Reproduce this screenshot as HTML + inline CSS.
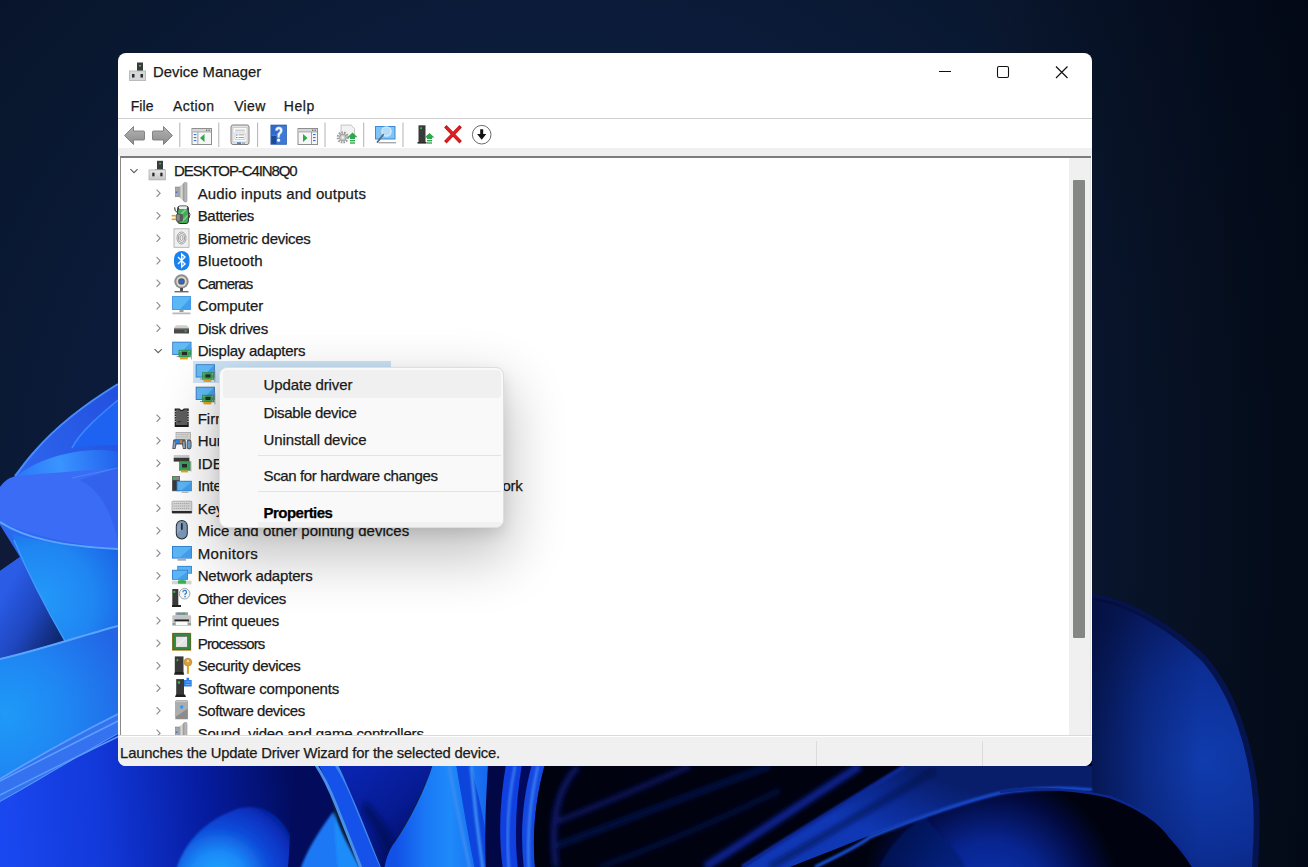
<!DOCTYPE html>
<html><head><meta charset="utf-8">
<style>
*{box-sizing:border-box;margin:0;padding:0}
html,body{width:1308px;height:867px;overflow:hidden;background:#06122a;font-family:"Liberation Sans",sans-serif;color:#000}
#wp{position:absolute;left:0;top:0}
#win{position:absolute;left:118px;top:53px;width:974px;height:713px;background:#fff;border-radius:8px;overflow:hidden}
.t{position:absolute;white-space:pre;line-height:1;-webkit-text-stroke:0.25px currentColor}
#tb{position:absolute;left:0;top:66px;width:974px;height:29px;background:#fff}
#band{position:absolute;left:0;top:95px;width:974px;height:8px;background:#f0f0f0}
#tree{position:absolute;left:2px;top:103px;width:971px;height:579px;background:#fff;border-top:2px solid #7c7c7c;border-left:1px solid #8a8a8a;overflow:hidden}
#sb{position:absolute;left:951px;top:105px;width:22px;height:577px;background:#f0f0f0;border-right:1px solid #e4e4e4}
#thumb{position:absolute;left:4px;top:22px;width:12px;height:458px;background:#858785;border-radius:1px}
#status{position:absolute;left:0;top:682px;width:974px;height:31px;background:#f0f0f0;border-top:1px solid #dadada}
#status:before{content:"";position:absolute;left:0;top:0;width:100%;height:1px;background:#fff}
.div{position:absolute;top:5px;width:1px;height:26px;background:#dcdcdc}
#menu{position:absolute;left:219px;top:366.5px;width:285px;height:161.5px;background:#f9f9f9;border-radius:8px;border:1px solid #dedede;box-shadow:0 24px 56px 6px rgba(0,0,0,0.24),0 6px 14px rgba(0,0,0,0.10);overflow:hidden}
#hover{position:absolute;left:3px;top:2px;width:278px;height:28px;background:#f0f0f0;border-radius:4px}
.sep{position:absolute;left:38px;width:243px;height:1px;background:#e3e3e3}
#sel{position:absolute;left:72.4px;top:203.1px;width:197.6px;height:22.2px;background:#cce4f7}
</style></head><body>
<svg id="wp" width="1308" height="867" viewBox="0 0 1308 867">
 <defs>
  <filter id="soft2" x="-20%" y="-20%" width="140%" height="140%"><feGaussianBlur stdDeviation="2.5"/></filter>
  <filter id="soft" x="-20%" y="-20%" width="140%" height="140%"><feGaussianBlur stdDeviation="1.2"/></filter>
  <radialGradient id="bg" cx="560" cy="500" r="950" gradientUnits="userSpaceOnUse">
   <stop offset="0" stop-color="#0f2248"/>
   <stop offset="0.45" stop-color="#0c1c3c"/>
   <stop offset="0.7" stop-color="#09172f"/>
   <stop offset="0.9" stop-color="#061128"/>
   <stop offset="1" stop-color="#040c1c"/>
  </radialGradient>
  <linearGradient id="rdark" x1="980" y1="0" x2="1308" y2="0" gradientUnits="userSpaceOnUse">
   <stop offset="0" stop-color="#000308" stop-opacity="0"/>
   <stop offset="1" stop-color="#000308" stop-opacity="0.55"/>
  </linearGradient>
  <linearGradient id="hl" x1="20" y1="470" x2="118" y2="455" gradientUnits="userSpaceOnUse"><stop offset="0" stop-color="#2c7af8"/><stop offset="0.4" stop-color="#3a94ff"/><stop offset="1" stop-color="#2262ee"/></linearGradient>
  <linearGradient id="lp1" x1="0" y1="480" x2="118" y2="400" gradientUnits="userSpaceOnUse">
   <stop offset="0" stop-color="#2f68f0"/><stop offset="1" stop-color="#2352e0"/>
  </linearGradient>
  <radialGradient id="cone" cx="40" cy="600" r="90" gradientUnits="userSpaceOnUse">
   <stop offset="0" stop-color="#2399fa"/><stop offset="0.6" stop-color="#1f86f2"/><stop offset="1" stop-color="#1c66e6"/>
  </radialGradient>
  <linearGradient id="under" x1="0" y1="600" x2="60" y2="635" gradientUnits="userSpaceOnUse">
   <stop offset="0" stop-color="#2a5ce6"/><stop offset="0.5" stop-color="#1f47c0"/><stop offset="1" stop-color="#0f2870"/>
  </linearGradient>
  <radialGradient id="wave" cx="5" cy="715" r="130" gradientUnits="userSpaceOnUse">
   <stop offset="0" stop-color="#1e9af8"/><stop offset="0.5" stop-color="#1f85f2"/><stop offset="1" stop-color="#2266e6"/>
  </radialGradient>
  <linearGradient id="bl" x1="0" y1="800" x2="290" y2="780" gradientUnits="userSpaceOnUse">
   <stop offset="0" stop-color="#1a48f0"/><stop offset="0.35" stop-color="#1238d8"/><stop offset="0.7" stop-color="#061ca0"/><stop offset="1" stop-color="#020d60"/>
  </linearGradient>
  <radialGradient id="blob" cx="218" cy="880" r="82" gradientUnits="userSpaceOnUse">
   <stop offset="0" stop-color="#22acff"/><stop offset="0.35" stop-color="#1a88f8"/><stop offset="0.65" stop-color="#0d4ad8"/><stop offset="0.88" stop-color="#0a34c4"/><stop offset="1" stop-color="#0626a8"/>
  </radialGradient>
  <linearGradient id="rib" x1="0" y1="0" x2="1" y2="0">
   <stop offset="0" stop-color="#1250e6"/><stop offset="0.5" stop-color="#1e86fa"/><stop offset="1" stop-color="#1560ea"/>
  </linearGradient>
  <radialGradient id="bowl" cx="990" cy="900" r="130" gradientUnits="userSpaceOnUse">
   <stop offset="0" stop-color="#0d35b8"/><stop offset="0.45" stop-color="#082590"/><stop offset="0.8" stop-color="#020a40"/><stop offset="1" stop-color="#00030f"/>
  </radialGradient>
  <radialGradient id="rp" cx="1205" cy="760" r="170" gradientUnits="userSpaceOnUse">
   <stop offset="0" stop-color="#103cae"/><stop offset="0.55" stop-color="#0c2e94"/><stop offset="1" stop-color="#081c66"/>
  </radialGradient>
  <linearGradient id="chan" x1="350" y1="770" x2="410" y2="850" gradientUnits="userSpaceOnUse"><stop offset="0" stop-color="#0a24b0"/><stop offset="0.6" stop-color="#061a90"/><stop offset="1" stop-color="#030f66"/></linearGradient>
  <linearGradient id="bigrib" x1="395" y1="0" x2="495" y2="0" gradientUnits="userSpaceOnUse"><stop offset="0" stop-color="#1250e6"/><stop offset="0.3" stop-color="#1a78f6"/><stop offset="0.55" stop-color="#1e8afa"/><stop offset="1" stop-color="#1560ea"/></linearGradient>
  <linearGradient id="rpov" x1="1092" y1="0" x2="1200" y2="0" gradientUnits="userSpaceOnUse"><stop offset="0" stop-color="#020826" stop-opacity="0.55"/><stop offset="0.5" stop-color="#020826" stop-opacity="0.2"/><stop offset="1" stop-color="#020826" stop-opacity="0"/></linearGradient>
  <linearGradient id="band" x1="905" y1="766" x2="880" y2="835" gradientUnits="userSpaceOnUse">
   <stop offset="0" stop-color="#081e6a"/><stop offset="0.5" stop-color="#0b2a92"/><stop offset="1" stop-color="#1038b4"/>
  </linearGradient>
 </defs>
 <rect width="1308" height="867" fill="url(#bg)"/>
 <rect width="1308" height="867" fill="url(#rdark)"/>

 <!-- ===== LEFT ===== -->
 <path d="M118,384 C95,398 60,422 35,451 C25,462 20,470 15,476 L0,487 L0,867 L118,867 Z" fill="url(#lp1)"/>
 <path d="M118,384 C95,398 60,422 35,451 C25,462 20,470 15,476" fill="none" stroke="#4a8cff" stroke-width="2"/>
 <path d="M118,400 C100,415 80,432 72,448 C90,446 105,445 118,445 Z" fill="#1e62f2"/>
 <path d="M118,400 C100,415 80,432 72,448" fill="none" stroke="#3f86ff" stroke-width="1.5"/>
 <path d="M16,477 C30,464 52,456 75,452 C95,449 110,450 118,452 L118,468 C90,471 50,474 16,477 Z" fill="url(#hl)"/>
 <path d="M0,487 C5,480 10,477 17,476 C50,473 90,470 118,468 L118,549 C80,546 40,538 0,522 Z" fill="#3a6cf5"/>
 <path d="M72,478 C90,474 105,471 118,468" fill="none" stroke="#4a86f8" stroke-width="1.2"/>
 <path d="M80,480 C100,490 110,510 118,540 L118,468 Z" fill="#2f5ce6" opacity="0.6"/>
 <path d="M0,525 L20,557 L0,571 Z" fill="#0f1a38"/>
 <path d="M12,534 C30,575 50,615 65,641 C85,635 100,630 118,626 L118,549 C60,546 25,538 12,534 Z" fill="url(#cone)"/>
 <path d="M0,571 L20,557 L65,641 C40,648 20,654 0,659 Z" fill="url(#under)"/>
 <path d="M14,540 C30,578 50,615 65,641" fill="none" stroke="#3aa0ff" stroke-width="1.5"/>
 <path d="M0,522 C25,538 60,546 118,549" fill="none" stroke="#5aa6ff" stroke-width="2"/>
 <path d="M0,659 C40,650 80,636 118,626 L118,714 C80,733 40,755 0,779 Z" fill="url(#wave)"/>
 <path d="M0,659 C40,650 80,636 118,626" fill="none" stroke="#58a6ff" stroke-width="2"/>
 <path d="M0,779 C40,755 80,733 118,714 L118,734 C80,755 40,780 0,802 Z" fill="#3572f0"/>
 <path d="M0,802 C40,780 80,755 118,734 L118,867 L0,867 Z" fill="#1642ea"/>
 <path d="M0,779 C40,755 80,733 118,714" fill="none" stroke="#5aa0ff" stroke-width="1.8"/>
 <path d="M0,802 C40,780 80,755 118,734" fill="none" stroke="#5a9cff" stroke-width="1.6"/>

 <!-- ===== BOTTOM ===== -->
 <path d="M118,734 C160,710 200,700 240,690 L330,690 L330,867 L0,867 L0,802 C40,780 80,755 118,734 Z" fill="url(#bl)"/>
 <path d="M0,781 C60,750 120,720 160,700" fill="none" stroke="#5aa0ff" stroke-width="1.5"/>
 <path d="M0,795 C60,765 120,735 170,712" fill="none" stroke="#5a9cff" stroke-width="1.4"/>
 <path d="M176,870 C184,842 207,818 240,808 C268,802 292,820 300,870 Z" fill="url(#blob)" filter="url(#soft)"/>
 <path d="M288,867 C292,845 300,830 312,815 L312,867 Z" fill="#020c56"/>
 <!-- 300-430 -->
 <path d="M296,764 L318,764 C326,782 332,798 334,810 C322,830 312,850 306,870 L288,870 C290,840 292,800 296,764 Z" fill="#030c5c"/>
 <path d="M300,870 C306,852 318,832 333,812 L342,840 L348,870 Z" fill="#1a78f4" filter="url(#soft)"/>
 <path d="M318,764 L338,764 C346,782 352,797 357,808 C366,830 374,850 382,870 L361,870 C352,845 346,830 343,823 C338,810 334,800 330,790 C326,780 322,770 318,764 Z" fill="#1552ea"/>
 <path d="M334,812 C340,832 352,852 361,870 L338,870 C336,850 334,830 334,812 Z" fill="#1e8cfa" filter="url(#soft)"/>
 <path d="M316,765 C326,780 332,795 336,805 C342,820 350,840 361,868" fill="none" stroke="#4a90e8" stroke-width="3"/>
 <path d="M336,765 C346,780 352,795 357,808 C366,830 374,850 382,868" fill="none" stroke="#3e88e8" stroke-width="3"/>
 <path d="M338,764 L433,764 C425,785 410,820 392,845 C388,852 386,860 385,870 L382,870 C374,850 366,830 357,808 Z" fill="url(#chan)"/>
 <path d="M365,800 C380,815 390,830 395,845 L388,858 C380,840 372,825 362,812 Z" fill="#020a50" opacity="0.6" filter="url(#soft2)"/>
 <!-- 420-545 -->
 <path d="M433,764 L500,764 C495,800 490,835 490,870 L384,870 C386,858 390,848 395,842 C410,820 425,790 433,764 Z" fill="url(#bigrib)"/>
 <path d="M449,766 C455,800 463,835 470,870" fill="none" stroke="#3a8cf0" stroke-width="3" filter="url(#soft)"/>
 <path d="M456,764 C462,800 468,835 475,870 L490,870 C488,835 480,800 470,764 Z" fill="#0c44dc"/>
 <path d="M471,766 C474,800 478,835 483,870" fill="none" stroke="#3e90f4" stroke-width="3" filter="url(#soft)"/>
 <path d="M488,764 L510,764 C500,800 498,835 505,870 L486,870 C484,835 486,800 488,764 Z" fill="#020846"/>
 <path d="M506,764 L526,764 C516,800 514,835 520,870 L503,870 C498,835 500,800 506,764 Z" fill="#1040e0"/>
 <path d="M515,766 C508,800 506,835 509,870" fill="none" stroke="#3a7cf0" stroke-width="2.5" filter="url(#soft)"/>
 <path d="M522,764 L532,764 C524,800 522,835 526,870 L518,870 C514,835 516,800 522,764 Z" fill="#020a60"/>
 <path d="M532,764 L545,764 C535,800 532,835 535,870 L524,870 C520,835 522,800 532,764 Z" fill="#1548e0"/>
 <path d="M538,766 C530,800 527,835 529,870" fill="none" stroke="#3a80f0" stroke-width="2.5" filter="url(#soft)"/>
  <!-- ===== RIGHT ===== -->
 <path d="M1092,597 C1130,602 1175,630 1205,660 C1235,695 1252,750 1256,800 C1258,830 1256,850 1255,867 L1092,867 Z" fill="url(#rp)"/>
 <path d="M1092,597 C1130,602 1175,630 1205,660 C1235,695 1252,750 1256,800 C1258,830 1256,850 1255,867" fill="none" stroke="#06144e" stroke-width="6"/>
 <path d="M1092,597 C1130,602 1175,630 1205,660 C1235,695 1252,750 1256,800 C1258,830 1256,850 1255,867 L1092,867 Z" fill="url(#rpov)"/>
 <!-- dark 545-740 -->
 <path d="M545,764 L1092,764 L1092,867 L535,867 C532,835 535,800 545,764 Z" fill="#000210"/>
 <g filter="url(#soft2)">
 <path d="M578,766 C556,790 550,825 556,867" fill="none" stroke="#0a1a78" stroke-width="7" opacity="0.75"/>
 <path d="M556,822 C600,805 640,788 690,766" fill="none" stroke="#0a1a70" stroke-width="6" opacity="0.7"/>
 <path d="M556,846 C620,822 690,795 770,766" fill="none" stroke="#0a1a6a" stroke-width="6" opacity="0.6"/>
 <path d="M600,867 C660,845 720,820 780,790" fill="none" stroke="#081658" stroke-width="6" opacity="0.55"/>
 <path d="M705,867 C760,832 810,798 860,766" fill="none" stroke="#0a2490" stroke-width="8"/>
 </g>
 <!-- diagonal ribbons -->
 <path d="M745,867 C800,830 860,795 907,766 L1092,766 L1092,790 C1060,787 1030,788 1000,793 C962,802 925,815 870,837 C850,847 830,857 815,867 Z" fill="url(#band)"/>
 <path d="M742,867 C800,830 858,795 905,766" fill="none" stroke="#0c2ca0" stroke-width="4" filter="url(#soft)"/>
 <path d="M770,867 C830,832 890,798 935,770" fill="none" stroke="#020a40" stroke-width="6" opacity="0.6" filter="url(#soft2)"/>
  <path d="M790,867 C860,840 940,805 1000,792 C1040,786 1080,790 1110,797 C1140,808 1160,822 1171,838 C1180,848 1188,858 1193,867 Z" fill="url(#bowl)"/>
 <path d="M879,867 C890,845 905,828 925,817 C945,840 960,855 965,867 Z" fill="#061a6a" opacity="0.6" filter="url(#soft)"/>
 <path d="M815,867 C840,855 860,845 870,837 C925,815 962,802 1000,793 C1030,788 1060,787 1092,790" fill="none" stroke="#1a52e2" stroke-width="3" filter="url(#soft)"/>
   <path d="M1000,792 C1040,786 1080,790 1110,797 C1140,808 1160,822 1171,838 C1180,848 1188,858 1193,867" fill="none" stroke="#0c2890" stroke-width="2.5"/>
</svg>
<div id="win">
<svg style="position:absolute;left:0;top:0" width="974" height="66">
 <g transform="translate(11,9)">
  <rect x="8" y="0.5" width="6" height="9.5" fill="#3a3a3a"/>
  <rect x="10" y="3" width="2" height="1.5" fill="#2ecc55"/>
  <rect x="0.5" y="9" width="16" height="9.5" fill="#d4d6d8" stroke="#b9bbbd" stroke-width="1"/>
  <rect x="3" y="12" width="2.5" height="3.5" fill="#2a2a2a"/>
  <rect x="11.5" y="12" width="2.5" height="3.5" fill="#2a2a2a"/>
 </g>
 <path d="M821,18.5 H833" stroke="#111" stroke-width="1.1"/>
 <rect x="879.5" y="13.5" width="11" height="11" rx="1.5" fill="none" stroke="#111" stroke-width="1.1"/>
 <path d="M938,13.5 L949.5,25 M949.5,13.5 L938,25" stroke="#111" stroke-width="1.2"/>
 <rect x="0" y="65" width="974" height="1.5" fill="#cfcfcf"/>
</svg>
<div id="tb">
<svg width="974" height="29" style="position:absolute;left:0;top:0">
<g transform="translate(-118,-119)">
 <defs>
  <linearGradient id="arrg" x1="0" y1="0" x2="0" y2="1"><stop offset="0" stop-color="#b4b4b4"/><stop offset="1" stop-color="#8c8c8c"/></linearGradient>
 </defs>
 <path d="M124.5,135.5 L133.5,126.5 L133.5,131 L143.5,131 Q144.5,131 144.5,132 L144.5,139 Q144.5,140 143.5,140 L133.5,140 L133.5,144.5 Z" fill="url(#arrg)" stroke="#7a7a7a" stroke-width="0.9" stroke-linejoin="round"/>
 <path d="M172.5,135.5 L163.5,126.5 L163.5,131 L153.5,131 Q152.5,131 152.5,132 L152.5,139 Q152.5,140 153.5,140 L163.5,140 L163.5,144.5 Z" fill="url(#arrg)" stroke="#7a7a7a" stroke-width="0.9" stroke-linejoin="round"/>
 <rect x="179.3" y="122.5" width="1" height="24.5" fill="#b4b4b4"/>
 <rect x="192" y="128.5" width="19.5" height="16" fill="#f6f6f6" stroke="#8e8e8e" stroke-width="1"/>
 <rect x="192.5" y="129" width="18.5" height="2.5" fill="#d4d8dc"/>
 <rect x="192.5" y="131.5" width="18.5" height="0.8" fill="#8e8e8e"/>
 <rect x="206" y="129.6" width="1.3" height="1.3" fill="#6a6a6a"/><rect x="208.5" y="129.6" width="1.3" height="1.3" fill="#6a6a6a"/>
 <rect x="197.5" y="132" width="0.8" height="12.5" fill="#8e8e8e"/>
 <rect x="193.8" y="134" width="2.6" height="1.1" fill="#3a78d0"/><rect x="193.8" y="137" width="2.6" height="1.1" fill="#3a78d0"/><rect x="193.8" y="140" width="2.6" height="1.1" fill="#3a78d0"/>
 <path d="M204.5,134 L200,138 L204.5,142 Z" fill="#2ea84a"/>
 <rect x="218.3" y="122.5" width="1" height="24.5" fill="#b4b4b4"/>
 <rect x="231" y="125" width="18" height="19.5" rx="2" fill="#e4e4e4" stroke="#7e7e7e" stroke-width="1"/>
 <rect x="233" y="127.5" width="14" height="14.5" fill="#fafafa" stroke="#b8b8b8" stroke-width="0.6"/>
 <rect x="235" y="129.5" width="10" height="2" fill="#d0d0d0"/>
 <rect x="235" y="133" width="10" height="6.5" fill="#fff" stroke="#a8a8a8" stroke-width="0.5"/>
 <rect x="236" y="134.5" width="1.5" height="1" fill="#3a78d0"/><rect x="238.5" y="134.5" width="5.5" height="0.8" fill="#8a8a8a"/>
 <rect x="236" y="137" width="1.5" height="1" fill="#8a8a8a"/><rect x="238.5" y="137" width="5.5" height="0.8" fill="#8a8a8a"/>
 <rect x="237" y="142.3" width="4" height="1.8" fill="#2a8ae8"/><rect x="242" y="142.3" width="3" height="1.8" fill="#b0b0b0"/>
 <rect x="257.1" y="122.5" width="1" height="24.5" fill="#b4b4b4"/>
 <rect x="270.5" y="124.7" width="16.3" height="20" fill="#1c4fa8"/>
 <rect x="271.3" y="125.5" width="14.7" height="18.4" fill="#3b7ad6"/>
 <rect x="271.3" y="125.5" width="7" height="9" fill="#2f6acb"/>
 <rect x="271.3" y="136" width="5" height="7.9" fill="#1d4a98"/>
 <path d="M275.3,130.5 Q275.3,126.8 278.8,126.8 Q282.5,126.8 282.5,130.5 Q282.5,133 280,134.5 L279.6,137.5 L277.6,137.5 L277.6,133.5 Q280,132.2 280,130.5 Q280,129.3 278.8,129.3 Q277.6,129.3 277.6,130.8 Z" fill="#f4f6fa" stroke="#9ab0d0" stroke-width="0.4"/>
 <circle cx="278.6" cy="140.2" r="1.6" fill="#f4f6fa"/>
 <rect x="298" y="128.5" width="19.5" height="16" fill="#f6f6f6" stroke="#8e8e8e" stroke-width="1"/>
 <rect x="298.5" y="129" width="18.5" height="2.5" fill="#d4d8dc"/>
 <rect x="298.5" y="131.5" width="18.5" height="0.8" fill="#8e8e8e"/>
 <rect x="312" y="129.6" width="1.3" height="1.3" fill="#6a6a6a"/><rect x="314.5" y="129.6" width="1.3" height="1.3" fill="#6a6a6a"/>
 <rect x="311.2" y="132" width="0.8" height="12.5" fill="#8e8e8e"/>
 <rect x="313" y="134" width="2.6" height="1.1" fill="#3a78d0"/><rect x="313" y="137" width="2.6" height="1.1" fill="#3a78d0"/><rect x="313" y="140" width="2.6" height="1.1" fill="#3a78d0"/>
 <path d="M303,134 L307.5,138 L303,142 Z" fill="#2ea84a"/>
 <rect x="324.5" y="122.5" width="1" height="24.5" fill="#b4b4b4"/>
 <path d="M341,125 L351,125 L354.5,128.5 L354.5,137 L341,137 Z" fill="#f2f2f2" stroke="#b0b0b0" stroke-width="0.7"/>
 <circle cx="342.8" cy="137.5" r="5" fill="none" stroke="#9a9a9a" stroke-width="2.2" stroke-dasharray="1.6 1.1"/>
 <circle cx="342.8" cy="137.5" r="3.4" fill="#c8c8c8" stroke="#8a8a8a" stroke-width="0.8"/>
 <circle cx="342.8" cy="137.5" r="1.2" fill="#f0f0f0"/>
 <path d="M352.5,132.5 L357.5,137.2 L355,137.2 L355,139 L350,139 L350,137.2 L347.5,137.2 Z" fill="#2ea84a"/>
 <rect x="350" y="140" width="5" height="1.4" fill="#2ea84a"/><rect x="350" y="142.3" width="5" height="1.4" fill="#2ea84a"/>
 <rect x="363.2" y="122.5" width="1" height="24.5" fill="#b4b4b4"/>
 <rect x="375" y="126" width="20.5" height="13.5" fill="#3a8ad8"/>
 <rect x="376" y="127" width="18.5" height="11.5" fill="#7ec4f6"/>
 <circle cx="386.5" cy="131.5" r="4.6" fill="#b4dcf8" stroke="#d8ecfa" stroke-width="1.3"/>
 <path d="M383.2,134.8 L377.5,142" stroke="#5a6a7a" stroke-width="1.8" stroke-linecap="round"/>
 <rect x="378.5" y="142" width="17.5" height="1.4" fill="#a8a8a8"/>
 <rect x="402.5" y="122.5" width="1" height="24.5" fill="#b4b4b4"/>
 <rect x="418.5" y="125.3" width="7" height="17" fill="#3a3a3a"/>
 <rect x="420.2" y="127.3" width="1.8" height="1.8" fill="#30c050"/>
 <rect x="417.5" y="142" width="9" height="1.6" fill="#2a2a2a"/>
 <path d="M429.5,133 L434.5,137.5 L432,137.5 L432,139 L427,139 L427,137.5 L424.5,137.5 Z" fill="#2ea84a"/>
 <rect x="427" y="140" width="5" height="1.4" fill="#2ea84a"/><rect x="427" y="142.3" width="5" height="1.4" fill="#2ea84a"/>
 <path d="M446.5,127.5 L459.5,141 M459.5,127.5 L446.5,141" stroke="#c21818" stroke-width="3.4" stroke-linecap="square"/>
 <path d="M446.5,127.5 L459.5,141 M459.5,127.5 L446.5,141" stroke="#e02020" stroke-width="2.2"/>
 <circle cx="481.7" cy="134.7" r="9.3" fill="#fff" stroke="#6a6a6a" stroke-width="1"/>
 <path d="M480.2,129.3 L483.2,129.3 L483.2,134 L486.3,134 L481.7,139.8 L477.1,134 L480.2,134 Z" fill="#111"/>
</g>
</svg>
</div>
<div id="band"></div>
<div id="tree">
 <div id="sel"></div>
 <svg style="position:absolute;left:-121px;top:-158px" width="1100" height="900"><path d="M130.40,169.10 L134.00,172.60 L137.60,169.10" fill="none" stroke="#606060" stroke-width="1.15"/>
<g transform="translate(147.50,160.50)">
<defs><linearGradient id="gbase" x1="0" y1="0" x2="0" y2="1"><stop offset="0" stop-color="#e6e7e8"/><stop offset="1" stop-color="#c4c6c8"/></linearGradient></defs>
<rect x="9.5" y="0.3" width="6" height="9" fill="#3c3c3c"/>
<rect x="11.7" y="2.3" width="1.8" height="1.6" fill="#2fc553"/>
<path d="M7.5,9 L17.5,9 L17.5,9.6 L7.5,9.6 Z" fill="#6a6a6a"/>
<rect x="1.5" y="9.4" width="16.6" height="10" fill="url(#gbase)" stroke="#a9abad" stroke-width="0.7"/>
<rect x="4.8" y="12.2" width="2.2" height="3.6" fill="#262626"/>
<rect x="12.8" y="12.2" width="2.2" height="3.6" fill="#262626"/>
</g>
<path d="M156.60,189.60 L160.10,193.20 L156.60,196.80" fill="none" stroke="#8c8c8c" stroke-width="1.15"/>
<g transform="translate(171.50,183.00)">
<defs><linearGradient id="gspk" x1="0" y1="0" x2="1" y2="0"><stop offset="0" stop-color="#9a9a9a"/><stop offset="0.5" stop-color="#dcdcdc"/><stop offset="1" stop-color="#8e8e8e"/></linearGradient></defs>
<rect x="3.8" y="4" width="3.8" height="9.8" fill="#a8a8a8" stroke="#7a7a7a" stroke-width="0.5"/>
<rect x="4.3" y="8.5" width="1.6" height="1.4" fill="#3a6ad0"/>
<path d="M7.5,4 L12.8,-0.6 L12.8,19 L7.5,13.8 Z" fill="url(#gspk)"/>
<rect x="12.5" y="-0.6" width="3" height="19.6" rx="1" fill="#b8b8b8" stroke="#8a8a8a" stroke-width="0.5"/>
</g>
<path d="M156.60,212.10 L160.10,215.70 L156.60,219.30" fill="none" stroke="#8c8c8c" stroke-width="1.15"/>
<g transform="translate(171.50,205.50)">
<path d="M3.2,1.8 Q2.8,5 5.5,7" fill="none" stroke="#2a2a2a" stroke-width="1"/>
<rect x="5.6" y="0" width="11.8" height="18.6" rx="3.5" fill="#2a2a2a"/>
<rect x="6.6" y="3.2" width="9.8" height="14.4" rx="2.2" fill="#3fae55"/>
<path d="M7,10 L13,4 L15.5,4 L7.5,12 Z M9,16 L16.3,8.7 L16.3,11 L11,16.5 Z" fill="#7ad08a"/>
<rect x="7.2" y="0.8" width="8.6" height="2.8" rx="1.3" fill="#e8eef0"/>
<path d="M16.8,6 Q19.8,8.5 17.5,12.5" fill="none" stroke="#3a3a3a" stroke-width="1"/>
<rect x="4.2" y="8.2" width="7.3" height="8.1" rx="2" fill="#5a5a5a"/>
<rect x="5.2" y="9.2" width="3" height="6" fill="#8a8a8a"/>
<rect x="0.2" y="9.4" width="4.2" height="1.6" fill="#e8a020"/>
<rect x="0.2" y="13" width="4.2" height="1.6" fill="#e8a020"/>
</g>
<path d="M156.60,234.60 L160.10,238.20 L156.60,241.80" fill="none" stroke="#8c8c8c" stroke-width="1.15"/>
<g transform="translate(171.50,228.00)">
<rect x="2.5" y="0.8" width="15" height="18.5" fill="#efefef" stroke="#a8a8a8" stroke-width="0.8"/>
<ellipse cx="10" cy="10" rx="4.5" ry="6" fill="none" stroke="#8a8a8a" stroke-width="0.8"/>
<ellipse cx="10" cy="10" rx="3" ry="4.3" fill="none" stroke="#8a8a8a" stroke-width="0.8"/>
<ellipse cx="10" cy="10" rx="1.5" ry="2.5" fill="none" stroke="#8a8a8a" stroke-width="0.8"/>
</g>
<path d="M156.60,257.10 L160.10,260.70 L156.60,264.30" fill="none" stroke="#8c8c8c" stroke-width="1.15"/>
<g transform="translate(171.50,250.50)">
<rect x="2.5" y="0.5" width="15.5" height="19.5" rx="7.7" fill="#1a82f0"/>
<path d="M6.5,6.5 L13.5,13.5 L10.2,16.5 L10.2,3.5 L13.5,6.5 L6.5,13.5" fill="none" stroke="#fff" stroke-width="1.4"/>
</g>
<path d="M156.60,279.60 L160.10,283.20 L156.60,286.80" fill="none" stroke="#8c8c8c" stroke-width="1.15"/>
<g transform="translate(171.50,273.00)">
<circle cx="10" cy="8.5" r="7.2" fill="#8e8e8e"/>
<circle cx="10" cy="8.5" r="5.2" fill="#d8d8d8"/>
<circle cx="10" cy="8.5" r="3.3" fill="#5a5a5a"/>
<circle cx="10" cy="8.5" r="1.8" fill="#2a6ac8"/>
<rect x="8.6" y="15" width="2.8" height="3" fill="#444"/>
<rect x="3" y="18" width="14" height="1.4" fill="#6a6a6a"/>
</g>
<path d="M156.60,302.10 L160.10,305.70 L156.60,309.30" fill="none" stroke="#8c8c8c" stroke-width="1.15"/>
<g transform="translate(171.50,295.50)">
<rect x="0.5" y="0.5" width="19" height="14" fill="#4a9be8"/>
<rect x="1.5" y="1.5" width="17" height="12" fill="#5bb8f5"/>
<path d="M9,13.5 L18.5,3 L18.5,13.5 Z" fill="#3ea0ee"/>
<rect x="8" y="14.5" width="4" height="2" fill="#9a9a9a"/>
<rect x="1" y="17" width="18" height="1.8" fill="#b8b8b8"/>
</g>
<path d="M156.60,324.60 L160.10,328.20 L156.60,331.80" fill="none" stroke="#8c8c8c" stroke-width="1.15"/>
<g transform="translate(171.50,318.00)">
<path d="M2.5,10.5 Q3,7.5 6,7.2 L14,7.2 Q17,7.5 17.5,10.5 Z" fill="#cfcfcf"/>
<rect x="2.5" y="10.3" width="15" height="5.2" fill="#4a4a4a"/>
<rect x="2.5" y="10.3" width="15" height="1" fill="#8a8a8a"/>
<rect x="13.2" y="12.2" width="1.8" height="1.6" fill="#30c050"/>
</g>
<path d="M154.60,349.10 L158.20,352.60 L161.80,349.10" fill="none" stroke="#606060" stroke-width="1.15"/>
<g transform="translate(171.50,340.50)">
<rect x="0.7" y="1.2" width="19.3" height="13.3" fill="#3c7cc4"/>
<rect x="1.6" y="2.1" width="17.5" height="11.5" fill="#62baf5"/>
<path d="M8,13.6 L19.1,2.1 L19.1,13.6 Z" fill="#44a2ee"/>
<rect x="19.4" y="7.2" width="0.9" height="11.7" fill="#9a9a9a"/>
<rect x="7.4" y="9.6" width="11.6" height="6.9" fill="#38a452" stroke="#2a7e3e" stroke-width="0.5"/>
<rect x="10.5" y="11.4" width="5" height="3.1" fill="#2a2a2a"/>
<circle cx="8.8" cy="10.9" r="0.55" fill="#bbb"/><circle cx="17.6" cy="10.9" r="0.55" fill="#bbb"/><circle cx="8.8" cy="15.2" r="0.55" fill="#bbb"/><circle cx="17.6" cy="15.2" r="0.55" fill="#bbb"/>
<rect x="8.5" y="16.5" width="7.8" height="2.4" fill="#e8a024"/>
<rect x="5" y="15.6" width="2.5" height="0.7" fill="#777"/>
</g>
<g transform="translate(195.00,363.00)">
<rect x="0.7" y="1.2" width="19.3" height="13.3" fill="#3c7cc4"/>
<rect x="1.6" y="2.1" width="17.5" height="11.5" fill="#62baf5"/>
<path d="M8,13.6 L19.1,2.1 L19.1,13.6 Z" fill="#44a2ee"/>
<rect x="19.4" y="7.2" width="0.9" height="11.7" fill="#9a9a9a"/>
<rect x="7.4" y="9.6" width="11.6" height="6.9" fill="#38a452" stroke="#2a7e3e" stroke-width="0.5"/>
<rect x="10.5" y="11.4" width="5" height="3.1" fill="#2a2a2a"/>
<circle cx="8.8" cy="10.9" r="0.55" fill="#bbb"/><circle cx="17.6" cy="10.9" r="0.55" fill="#bbb"/><circle cx="8.8" cy="15.2" r="0.55" fill="#bbb"/><circle cx="17.6" cy="15.2" r="0.55" fill="#bbb"/>
<rect x="8.5" y="16.5" width="7.8" height="2.4" fill="#e8a024"/>
<rect x="5" y="15.6" width="2.5" height="0.7" fill="#777"/>
</g>
<g transform="translate(195.00,385.50)">
<rect x="0.7" y="1.2" width="19.3" height="13.3" fill="#3c7cc4"/>
<rect x="1.6" y="2.1" width="17.5" height="11.5" fill="#62baf5"/>
<path d="M8,13.6 L19.1,2.1 L19.1,13.6 Z" fill="#44a2ee"/>
<rect x="19.4" y="7.2" width="0.9" height="11.7" fill="#9a9a9a"/>
<rect x="7.4" y="9.6" width="11.6" height="6.9" fill="#38a452" stroke="#2a7e3e" stroke-width="0.5"/>
<rect x="10.5" y="11.4" width="5" height="3.1" fill="#2a2a2a"/>
<circle cx="8.8" cy="10.9" r="0.55" fill="#bbb"/><circle cx="17.6" cy="10.9" r="0.55" fill="#bbb"/><circle cx="8.8" cy="15.2" r="0.55" fill="#bbb"/><circle cx="17.6" cy="15.2" r="0.55" fill="#bbb"/>
<rect x="8.5" y="16.5" width="7.8" height="2.4" fill="#e8a024"/>
<rect x="5" y="15.6" width="2.5" height="0.7" fill="#777"/>
</g>
<path d="M156.60,414.60 L160.10,418.20 L156.60,421.80" fill="none" stroke="#8c8c8c" stroke-width="1.15"/>
<g transform="translate(171.50,408.00)">
<path d="M3.2,0.5 L8,0.5 Q10.2,3.4 12.4,0.5 L17.2,0.5 L17.2,19 L3.2,19 Z" fill="#1a1a1a"/>
<path d="M4.4,1.6 L7.5,1.6 Q10.2,4.6 12.9,1.6 L16,1.6 L16,17 L4.4,17 Z" fill="#5e5e5e"/>
<path d="M2.4,3.5 H4.6 M2.4,6 H4.6 M2.4,8.5 H4.6 M2.4,11 H4.6 M2.4,13.5 H4.6 M15.8,3.5 H18 M15.8,6 H18 M15.8,8.5 H18 M15.8,11 H18 M15.8,13.5 H18" stroke="#e0e0e0" stroke-width="0.8"/>
<rect x="6" y="13" width="3.5" height="1.4" fill="#3a3a3a"/>
</g>
<path d="M156.60,437.10 L160.10,440.70 L156.60,444.30" fill="none" stroke="#8c8c8c" stroke-width="1.15"/>
<g transform="translate(171.50,430.50)">
<rect x="4.5" y="1.8" width="14.5" height="7" fill="#d8d8d8" stroke="#9a9a9a" stroke-width="0.6"/>
<path d="M6,4 H17.5 M6,6.3 H17.5" stroke="#a8a8a8" stroke-width="0.7" stroke-dasharray="1.2 0.7"/>
<path d="M0.8,18.5 L1.6,10 Q2,8.8 3.5,8.8 L12.5,8.8 Q14,8.8 14.2,10 L14.8,18.5 L11.5,18.5 L10.5,14 L5,14 L4,18.5 Z" fill="#5c5c5c"/>
<path d="M1.8,17.5 L2.4,11 L4,11 L3.4,17.5 Z M11.8,17.5 L11.4,11 L13,11 L13.6,17.5 Z" fill="#8aa8c8"/>
<rect x="4.2" y="9.6" width="3.2" height="3" fill="#2a8af0"/>
<rect x="8" y="9.6" width="2.6" height="3" fill="#c8884a"/>
<rect x="15.2" y="9" width="4.8" height="10" rx="2.4" fill="#4a4a4a"/>
<rect x="16" y="10" width="3.2" height="8" rx="1.6" fill="#7a9cc0"/>
</g>
<path d="M156.60,459.60 L160.10,463.20 L156.60,466.80" fill="none" stroke="#8c8c8c" stroke-width="1.15"/>
<g transform="translate(171.50,453.00)">
<rect x="2.2" y="2" width="15.7" height="3" fill="#cfcfcf"/>
<rect x="2.2" y="4.8" width="15.7" height="3.8" fill="#3a3a3a"/>
<rect x="7.8" y="8.5" width="10.9" height="8.9" fill="#38a452" stroke="#2a7e3e" stroke-width="0.5"/>
<rect x="10.5" y="11" width="5" height="3.5" fill="#2a2a2a"/>
<rect x="7.8" y="10" width="1" height="5" fill="#4a90e0"/>
<rect x="19" y="8.5" width="0.8" height="10" fill="#9a9a9a"/>
<rect x="9.5" y="17.4" width="7" height="2" fill="#e8a024"/>
</g>
<path d="M156.60,482.10 L160.10,485.70 L156.60,489.30" fill="none" stroke="#8c8c8c" stroke-width="1.15"/>
<g transform="translate(171.50,475.50)">
<rect x="0.5" y="0.5" width="8" height="15.2" fill="#6a6a6a"/>
<rect x="1.2" y="1.2" width="6.6" height="3.2" fill="#8a8a8a"/>
<rect x="2" y="1.8" width="2" height="1.6" fill="#30c050"/>
<rect x="1.2" y="4.8" width="6.6" height="10.2" fill="#3a3a3a"/>
<rect x="5.1" y="5.3" width="15.2" height="10.4" fill="#2f7ed0"/>
<rect x="6" y="6.2" width="13.4" height="8.6" fill="#5cb6f5"/>
<path d="M10,14.8 L19.4,7 L19.4,14.8 Z" fill="#44a0ee"/>
<rect x="10" y="16.2" width="7" height="1" fill="#a0a0a0"/>
</g>
<path d="M156.60,504.60 L160.10,508.20 L156.60,511.80" fill="none" stroke="#8c8c8c" stroke-width="1.15"/>
<g transform="translate(171.50,498.00)">
<rect x="0.5" y="3.2" width="19.8" height="12" rx="0.8" fill="#dcdcdc" stroke="#8e8e8e" stroke-width="0.6"/>
<path d="M2.2,5.6 H18.6 M2.2,8 H18.6 M2.2,10.4 H18.6" stroke="#a4a4a4" stroke-width="0.9" stroke-dasharray="1.4 0.6"/>
<rect x="0.5" y="13" width="19.8" height="2.2" fill="#2a2a2a"/>
</g>
<path d="M156.60,527.10 L160.10,530.70 L156.60,534.30" fill="none" stroke="#8c8c8c" stroke-width="1.15"/>
<g transform="translate(171.50,520.50)">
<rect x="4.3" y="-0.6" width="12" height="19.6" rx="6" fill="#2a2a2a"/>
<rect x="5.3" y="0.4" width="10" height="17.6" rx="5" fill="#7c98b8"/>
<path d="M5.3,6 Q8,2 10.3,1 L10.3,9 L5.3,13 Z" fill="#9ab4d0" opacity="0.6"/>
<rect x="9.4" y="2.5" width="1.8" height="7" rx="0.9" fill="#2a2a2a"/>
</g>
<path d="M156.60,549.60 L160.10,553.20 L156.60,556.80" fill="none" stroke="#8c8c8c" stroke-width="1.15"/>
<g transform="translate(171.50,543.00)">
<rect x="0.5" y="3" width="19.9" height="12.6" fill="#2f7ed0"/>
<rect x="1.4" y="3.9" width="18.1" height="10.8" fill="#5cb6f5"/>
<path d="M8,14.7 L19.5,5 L19.5,14.7 Z" fill="#44a0ee"/>
<rect x="6" y="16.3" width="8.5" height="1.2" fill="#8a8a8a"/>
</g>
<path d="M156.60,572.10 L160.10,575.70 L156.60,579.30" fill="none" stroke="#8c8c8c" stroke-width="1.15"/>
<g transform="translate(171.50,565.50)">
<rect x="5.8" y="0.4" width="14.6" height="7.8" fill="#2f7ed0"/>
<rect x="6.6" y="1.2" width="13" height="6.2" fill="#5cb6f5"/>
<rect x="0.5" y="4.3" width="16" height="10" fill="#2f7ed0"/>
<rect x="1.3" y="5.1" width="14.4" height="8.4" fill="#5cb6f5"/>
<path d="M6,13.5 L15.7,6.5 L15.7,13.5 Z" fill="#44a0ee"/>
<rect x="0.5" y="15.2" width="19.5" height="3.6" fill="#d4d4d4"/>
<rect x="6.5" y="15" width="8" height="3.2" fill="#36b052"/>
<rect x="8" y="14.3" width="5" height="1" fill="#36b052"/>
</g>
<path d="M156.60,594.60 L160.10,598.20 L156.60,601.80" fill="none" stroke="#8c8c8c" stroke-width="1.15"/>
<g transform="translate(171.50,588.00)">
<rect x="0.8" y="1" width="6" height="16.5" fill="#3a3a3a"/>
<rect x="1.8" y="2.8" width="2" height="2" fill="#30c050"/>
<rect x="0.5" y="17" width="9" height="2" fill="#222"/>
<circle cx="13.1" cy="5.7" r="5.3" fill="#f4f4f4" stroke="#9a9a9a" stroke-width="0.9"/>
<path d="M11.3,4.3 Q11.3,2.4 13.1,2.4 Q15,2.4 15,4.2 Q15,5.4 13.6,6 L13.6,7.3" fill="none" stroke="#2a7ad8" stroke-width="1.2"/>
<rect x="12.9" y="8" width="1.3" height="1.3" fill="#2a7ad8"/>
</g>
<path d="M156.60,617.10 L160.10,620.70 L156.60,624.30" fill="none" stroke="#8c8c8c" stroke-width="1.15"/>
<g transform="translate(171.50,610.50)">
<rect x="4" y="1.8" width="12.5" height="3.2" fill="#9a9a9a"/>
<rect x="6" y="2.3" width="4" height="1.6" fill="#4a90e0"/><rect x="10.5" y="2.3" width="3" height="1.6" fill="#36b052"/>
<path d="M0.8,6 Q0.8,4.8 2,4.8 L18.4,4.8 Q19.6,4.8 19.6,6 L19.6,12.5 L0.8,12.5 Z" fill="#c4c4c4"/>
<rect x="3" y="9" width="14.4" height="2" fill="#1e1e1e"/>
<rect x="4" y="11" width="12.4" height="4" fill="#fafafa" stroke="#a0a0a0" stroke-width="0.5"/>
<rect x="0.8" y="12.5" width="3.2" height="2.5" fill="#9a9a9a"/><rect x="16.4" y="12.5" width="3.2" height="2.5" fill="#9a9a9a"/>
</g>
<path d="M156.60,639.60 L160.10,643.20 L156.60,646.80" fill="none" stroke="#8c8c8c" stroke-width="1.15"/>
<g transform="translate(171.50,633.00)">
<rect x="0.5" y="-0.2" width="19.2" height="17.9" fill="#d88a2a"/>
<rect x="1.4" y="0.7" width="17.4" height="16.1" fill="#2e8a42" stroke="#1e5a2a" stroke-width="0.6"/>
<rect x="4.2" y="3.3" width="11.8" height="11" fill="#e4e4e4" stroke="#5a5a5a" stroke-width="0.7"/>
<path d="M5,13.5 L15,4" stroke="#f8f8f8" stroke-width="1.5" opacity="0.6"/>
</g>
<path d="M156.60,662.10 L160.10,665.70 L156.60,669.30" fill="none" stroke="#8c8c8c" stroke-width="1.15"/>
<g transform="translate(171.50,655.50)">
<rect x="3.3" y="0.9" width="8.7" height="16.4" fill="#383838"/>
<path d="M5.2,3 L7.4,4.6 L5.2,6.2 Z" fill="#30c050"/>
<path d="M2.5,19.3 L3.5,16.6 L11.8,16.6 L12.8,19.3 Z" fill="#1e1e1e"/>
<circle cx="16.4" cy="6.6" r="3.9" fill="#d8a040" stroke="#a87820" stroke-width="0.6"/>
<circle cx="16.4" cy="5.6" r="1.2" fill="#f0d8a0"/>
<rect x="15.4" y="9.8" width="2" height="8.5" fill="#e0a020"/>
</g>
<path d="M156.60,684.60 L160.10,688.20 L156.60,691.80" fill="none" stroke="#8c8c8c" stroke-width="1.15"/>
<g transform="translate(171.50,678.00)">
<rect x="4.7" y="1.1" width="7.8" height="16.5" fill="#383838"/>
<rect x="6.3" y="3.3" width="2.2" height="2.4" fill="#30c050"/>
<path d="M3.5,19 L4.5,16.4 L13.5,16.4 L14.5,19 Z" fill="#1e1e1e"/>
<path d="M12.5,2 L15,2 L15,-0.3 L17.6,-0.3 L17.6,2 L20.2,2 L20.2,8.4 L12.5,8.4 Z" fill="#2a7ee8"/>
<path d="M14,4 H19 M14,6.5 H19" stroke="#8ec0f8" stroke-width="0.7"/>
</g>
<path d="M156.60,707.10 L160.10,710.70 L156.60,714.30" fill="none" stroke="#8c8c8c" stroke-width="1.15"/>
<g transform="translate(171.50,700.50)">
<path d="M3.8,1.5 Q3.8,-0.5 5.8,-0.5 L14.4,-0.5 Q16.4,-0.5 16.4,1.5 L16.4,18.8 L3.8,18.8 Z" fill="#8c8c8c"/>
<path d="M3.8,1.5 Q3.8,-0.5 5.8,-0.5 L14.4,-0.5 Q16.4,-0.5 16.4,1.5 L16.4,8 L3.8,16.5 Z" fill="#adadad"/>
<rect x="4.5" y="0.3" width="11.2" height="1.2" fill="#c8c8c8"/>
<circle cx="10.2" cy="6.5" r="1.7" fill="#2a9af8"/>
</g>
<path d="M156.60,729.60 L160.10,733.20 L156.60,736.80" fill="none" stroke="#8c8c8c" stroke-width="1.15"/>
<g transform="translate(171.50,723.00)">
<defs><linearGradient id="gspk" x1="0" y1="0" x2="1" y2="0"><stop offset="0" stop-color="#9a9a9a"/><stop offset="0.5" stop-color="#dcdcdc"/><stop offset="1" stop-color="#8e8e8e"/></linearGradient></defs>
<rect x="3.8" y="4" width="3.8" height="9.8" fill="#a8a8a8" stroke="#7a7a7a" stroke-width="0.5"/>
<rect x="4.3" y="8.5" width="1.6" height="1.4" fill="#3a6ad0"/>
<path d="M7.5,4 L12.8,-0.6 L12.8,19 L7.5,13.8 Z" fill="url(#gspk)"/>
<rect x="12.5" y="-0.6" width="3" height="19.6" rx="1" fill="#b8b8b8" stroke="#8a8a8a" stroke-width="0.5"/>
</g></svg>
 <div class="t" style="left:53.10px;top:5.20px;font-size:15px;letter-spacing:-1.103px;font-weight:400;color:#1a1a1a">DESKTOP-C4IN8Q0</div>
<div class="t" style="left:76.70px;top:27.70px;font-size:15px;letter-spacing:0.134px;font-weight:400;color:#1a1a1a">Audio inputs and outputs</div>
<div class="t" style="left:76.70px;top:50.20px;font-size:15px;letter-spacing:-0.325px;font-weight:400;color:#1a1a1a">Batteries</div>
<div class="t" style="left:76.70px;top:72.70px;font-size:15px;letter-spacing:-0.278px;font-weight:400;color:#1a1a1a">Biometric devices</div>
<div class="t" style="left:76.70px;top:95.20px;font-size:15px;letter-spacing:0.201px;font-weight:400;color:#1a1a1a">Bluetooth</div>
<div class="t" style="left:76.70px;top:117.70px;font-size:15px;letter-spacing:-0.893px;font-weight:400;color:#1a1a1a">Cameras</div>
<div class="t" style="left:76.70px;top:140.20px;font-size:15px;letter-spacing:-0.051px;font-weight:400;color:#1a1a1a">Computer</div>
<div class="t" style="left:76.70px;top:162.70px;font-size:15px;letter-spacing:-0.286px;font-weight:400;color:#1a1a1a">Disk drives</div>
<div class="t" style="left:76.70px;top:185.20px;font-size:15px;letter-spacing:-0.256px;font-weight:400;color:#1a1a1a">Display adapters</div>
<div class="t" style="left:100.30px;top:207.70px;font-size:15px;letter-spacing:0.000px;font-weight:400;color:#1a1a1a">NVIDIA GeForce GTX 1650</div>
<div class="t" style="left:100.30px;top:230.20px;font-size:15px;letter-spacing:0.000px;font-weight:400;color:#1a1a1a">Intel(R) UHD Graphics</div>
<div class="t" style="left:76.70px;top:252.70px;font-size:15px;letter-spacing:0.000px;font-weight:400;color:#1a1a1a">Firmware</div>
<div class="t" style="left:76.70px;top:275.20px;font-size:15px;letter-spacing:0.000px;font-weight:400;color:#1a1a1a">Human Interface Devices</div>
<div class="t" style="left:76.70px;top:297.70px;font-size:15px;letter-spacing:0.000px;font-weight:400;color:#1a1a1a">IDE ATA/ATAPI controllers</div>
<div class="t" style="left:76.70px;top:320.20px;font-size:15px;letter-spacing:-0.304px;font-weight:400;color:#1a1a1a">Intel(R) Dynamic Platform and Thermal Framework</div>
<div class="t" style="left:76.70px;top:342.70px;font-size:15px;letter-spacing:0.000px;font-weight:400;color:#1a1a1a">Keyboards</div>
<div class="t" style="left:76.70px;top:365.20px;font-size:15px;letter-spacing:0.018px;font-weight:400;color:#1a1a1a">Mice and other pointing devices</div>
<div class="t" style="left:76.70px;top:387.70px;font-size:15px;letter-spacing:0.367px;font-weight:400;color:#1a1a1a">Monitors</div>
<div class="t" style="left:76.70px;top:410.20px;font-size:15px;letter-spacing:-0.171px;font-weight:400;color:#1a1a1a">Network adapters</div>
<div class="t" style="left:76.70px;top:432.70px;font-size:15px;letter-spacing:-0.337px;font-weight:400;color:#1a1a1a">Other devices</div>
<div class="t" style="left:76.70px;top:455.20px;font-size:15px;letter-spacing:-0.249px;font-weight:400;color:#1a1a1a">Print queues</div>
<div class="t" style="left:76.70px;top:477.70px;font-size:15px;letter-spacing:-0.815px;font-weight:400;color:#1a1a1a">Processors</div>
<div class="t" style="left:76.70px;top:500.20px;font-size:15px;letter-spacing:-0.415px;font-weight:400;color:#1a1a1a">Security devices</div>
<div class="t" style="left:76.70px;top:522.70px;font-size:15px;letter-spacing:-0.199px;font-weight:400;color:#1a1a1a">Software components</div>
<div class="t" style="left:76.70px;top:545.20px;font-size:15px;letter-spacing:-0.449px;font-weight:400;color:#1a1a1a">Software devices</div>
<div class="t" style="left:76.70px;top:567.70px;font-size:15px;letter-spacing:-0.175px;font-weight:400;color:#1a1a1a">Sound, video and game controllers</div>
</div>
<div id="sb"><div id="thumb"></div></div>
<div id="status"><div class="div" style="left:698px"></div><div class="div" style="left:864px"></div></div>
<div class="t" style="left:35.11px;top:12.17px;font-size:14.8px;letter-spacing:0.025px;font-weight:400;color:#1a1a1a">Device Manager</div>
<div class="t" style="left:12.66px;top:45.75px;font-size:14px;letter-spacing:0.079px;font-weight:400;color:#1a1a1a">File</div>
<div class="t" style="left:54.96px;top:45.75px;font-size:14px;letter-spacing:0.456px;font-weight:400;color:#1a1a1a">Action</div>
<div class="t" style="left:116.16px;top:45.75px;font-size:14px;letter-spacing:0.369px;font-weight:400;color:#1a1a1a">View</div>
<div class="t" style="left:165.86px;top:45.75px;font-size:14px;letter-spacing:0.534px;font-weight:400;color:#1a1a1a">Help</div>
<div class="t" style="left:2.11px;top:693.07px;font-size:14.8px;letter-spacing:-0.186px;font-weight:400;color:#1a1a1a">Launches the Update Driver Wizard for the selected device.</div>
</div>
<div id="menu">
 <div id="hover"></div>
 <div class="sep" style="top:87.5px"></div>
 <div class="sep" style="top:123.8px"></div>
 <div style="position:absolute;left:38px;top:154px;width:243px;height:6px;background:#f1f1f1"></div>
 <div class="t" style="left:43.60px;top:9.90px;font-size:15px;letter-spacing:-0.096px;font-weight:400;color:#1a1a1a">Update driver</div>
<div class="t" style="left:43.60px;top:37.40px;font-size:15px;letter-spacing:-0.336px;font-weight:400;color:#1a1a1a">Disable device</div>
<div class="t" style="left:43.60px;top:64.90px;font-size:15px;letter-spacing:-0.138px;font-weight:400;color:#1a1a1a">Uninstall device</div>
<div class="t" style="left:43.60px;top:100.90px;font-size:15px;letter-spacing:-0.381px;font-weight:400;color:#1a1a1a">Scan for hardware changes</div>
<div class="t" style="left:43.60px;top:137.60px;font-size:15px;letter-spacing:-0.545px;font-weight:700;color:#000">Properties</div>
</div>
</body></html>
